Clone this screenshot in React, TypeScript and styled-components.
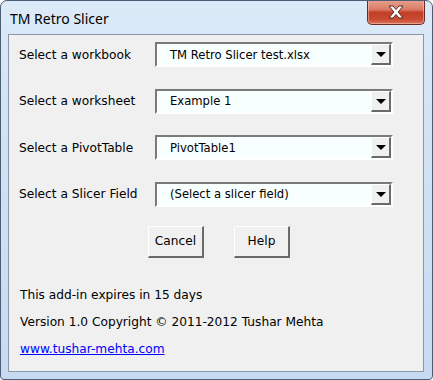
import React from "react";
import styled, { createGlobalStyle } from "styled-components";

const Global = createGlobalStyle`
  html, body { margin: 0; padding: 0; background: #ffffff; }
  #root { width: 433px; height: 380px; }
`;

const Frame = styled.div`
  box-sizing: border-box;
  width: 433px;
  height: 380px;
  border: 1px solid #4d5d73;
  border-radius: 7px 7px 4px 4px;
  background: linear-gradient(180deg, #dceaf8 0%, #d2e3f5 30%, #c6dbf1 100%);
  display: flex;
  flex-direction: column;
  padding: 0 8px 7px 7px;
  overflow: hidden;
`;

const TitleBar = styled.div`
  height: 33px;
  display: flex;
  align-items: flex-start;
  justify-content: space-between;
`;

const Title = styled.div`
  font-family: "Noto Sans", "Open Sans", sans-serif;
  font-size: 14px;
  color: #000;
  padding: 8px 0 0 2px;
`;

const CloseButton = styled.div`
  width: 58px;
  height: 25px;
  margin-top: -1px;
  margin-right: -1px;
  box-sizing: border-box;
  border: 1px solid #6b2a24;
  border-top: none;
  border-radius: 0 0 5px 5px;
  background: linear-gradient(180deg, #e6a290 0%, #d97a64 40%, #c33f28 52%, #c94a32 80%, #d9735a 100%);
  box-shadow: inset 0 0 0 1px rgba(255, 220, 210, 0.45);
  display: flex;
  align-items: center;
  justify-content: center;
`;

const Client = styled.div`
  flex: 1;
  box-sizing: border-box;
  border: 1px solid #8c98a8;
  background: #f0f0f0;
  padding: 7px 0 0 10px;
  display: flex;
  flex-direction: column;
`;

const Form = styled.div`
  display: flex;
  flex-direction: column;
  gap: 21.5px;
`;

const Row = styled.div`
  display: flex;
  align-items: center;
  height: 25px;
`;

const Label = styled.div`
  width: 136px;
  font-family: "DejaVu Sans", sans-serif;
  font-size: 12.2px;
  color: #000;
`;

const Combo = styled.div`
  box-sizing: border-box;
  width: 238px;
  height: 25px;
  border-top: 2px solid #7a7a7a;
  border-left: 2px solid #7a7a7a;
  border-right: 2px solid #ffffff;
  border-bottom: 2px solid #ffffff;
  background: #f7ffff;
  display: flex;
  align-items: center;
`;

const ComboText = styled.div`
  flex: 1;
  padding-left: 13px;
  font-family: "DejaVu Sans", sans-serif;
  font-size: 11.6px;
  color: #000;
  white-space: nowrap;
`;

const DropButton = styled.div`
  box-sizing: border-box;
  width: 20px;
  height: 21px;
  background: #f0f0f0;
  border-top: 1px solid #ffffff;
  border-left: 1px solid #ffffff;
  border-right: 2px solid #6a6a6a;
  border-bottom: 2px solid #6a6a6a;
  display: flex;
  align-items: center;
  justify-content: center;
`;

const Arrow = styled.div`
  width: 0;
  height: 0;
  border-left: 5px solid transparent;
  border-right: 5px solid transparent;
  border-top: 5px solid #000;
  margin-top: 1px;
`;

const Buttons = styled.div`
  display: flex;
  gap: 30px;
  padding-left: 129px;
  margin-top: 19px;
`;

const Button = styled.div`
  box-sizing: border-box;
  width: 56px;
  height: 32px;
  background: #f0f0f0;
  border-top: 1px solid #ffffff;
  border-left: 1px solid #ffffff;
  border-right: 2px solid #6a6a6a;
  border-bottom: 2px solid #6a6a6a;
  display: flex;
  align-items: center;
  justify-content: center;
  font-family: "DejaVu Sans", sans-serif;
  font-size: 12.2px;
  color: #000;
`;

const Info = styled.div`
  margin-top: 30px;
  padding-left: 1px;
  display: flex;
  flex-direction: column;
  gap: 12px;
  font-family: "DejaVu Sans", sans-serif;
  font-size: 12.2px;
  color: #000;
  line-height: 15px;
`;

const Link = styled.a`
  color: #0000ff;
  text-decoration: underline;
`;

const fields = [
  ["Select a workbook", "TM Retro Slicer test.xlsx"],
  ["Select a worksheet", "Example 1"],
  ["Select a PivotTable", "PivotTable1"],
  ["Select a Slicer Field", "(Select a slicer field)"],
];

export default function App() {
  return (
    <>
      <Global />
      <Frame>
        <TitleBar>
          <Title>TM Retro Slicer</Title>
          <CloseButton>
            <svg width="18" height="14" viewBox="0 0 18 14">
              <path
                d="M2 1 L6 1 L9 4.5 L12 1 L16 1 L11.2 7 L16 13 L12 13 L9 9.5 L6 13 L2 13 L6.8 7 Z"
                fill="#ffffff"
                stroke="#5a2a24"
                strokeWidth="1"
                strokeLinejoin="round"
              />
            </svg>
          </CloseButton>
        </TitleBar>
        <Client>
          <Form>
            {fields.map(([label, value]) => (
              <Row key={label}>
                <Label>{label}</Label>
                <Combo>
                  <ComboText>{value}</ComboText>
                  <DropButton>
                    <Arrow />
                  </DropButton>
                </Combo>
              </Row>
            ))}
          </Form>
          <Buttons>
            <Button>Cancel</Button>
            <Button>Help</Button>
          </Buttons>
          <Info>
            <div>This add-in expires in 15 days</div>
            <div>Version 1.0 Copyright © 2011-2012 Tushar Mehta</div>
            <Link href="#">www.tushar-mehta.com</Link>
          </Info>
        </Client>
      </Frame>
    </>
  );
}
